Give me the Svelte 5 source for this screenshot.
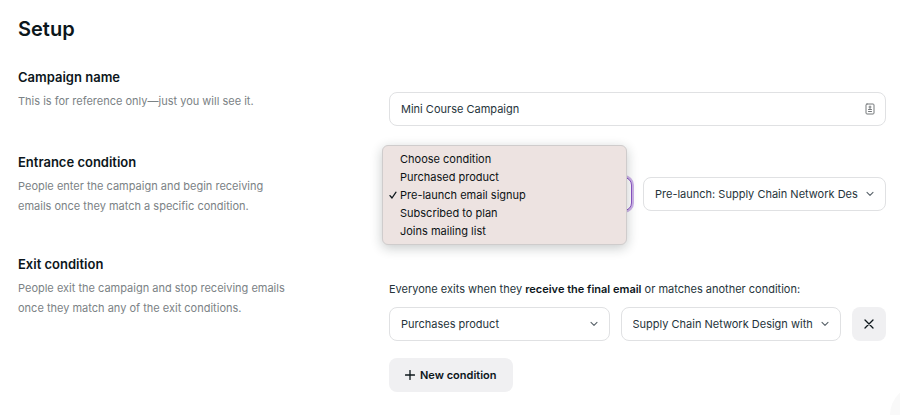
<script>
  let name = $state('Mini Course Campaign');
  let entrance = $state('Pre-launch email signup');
  let open = $state(true);
  const conditions = [
    'Choose condition',
    'Purchased product',
    'Pre-launch email signup',
    'Subscribed to plan',
    'Joins mailing list'
  ];

  function choose(condition) {
    entrance = condition;
    open = false;
  }
</script>

{#snippet chevron()}
  <svg class="chevron" viewBox="0 0 8 6" aria-hidden="true"><path d="M1 1.3 4 4.3 7 1.3" /></svg>
{/snippet}

<main>
  <h1>Setup</h1>

  <section class="name-row">
    <div class="info">
      <h2><label for="campaign-name">Campaign name</label></h2>
      <p>This is for reference only—just you will see it.</p>
    </div>
    <div class="controls">
      <div class="field">
        <input id="campaign-name" type="text" bind:value={name} />
        <svg class="card" viewBox="0 0 10 12" aria-hidden="true">
          <rect x="1" y="1" width="8" height="10" rx="1" />
          <path d="M5 3v3.5M4 4h2M3.5 6.5h3M3.5 8.5h3" />
        </svg>
      </div>
    </div>
  </section>

  <section class="entrance-row">
    <div class="info">
      <h2>Entrance condition</h2>
      <p>People enter the campaign and begin receiving<br />emails once they match a specific condition.</p>
    </div>
    <div class="controls">
      <div class="line">
        <div class="field">
          <button
            class="trigger"
            type="button"
            aria-haspopup="listbox"
            aria-expanded={open}
            aria-label="Entrance condition"
            onclick={() => (open = !open)}
          >{open ? '' : entrance}</button>
          {@render chevron()}
          {#if open}
            <div class="menu" role="listbox" aria-label="Entrance condition">
              {#each conditions as condition}
                <button type="button" role="option" aria-selected={condition === entrance} onclick={() => choose(condition)}>
                  <svg class="check" viewBox="0 0 8 8" aria-hidden="true">
                    {#if condition === entrance}<path d="M1 4.6 3 7 7 1.2" />{/if}
                  </svg>
                  {condition}
                </button>
              {/each}
            </div>
          {/if}
        </div>
        <div class="field">
          <select aria-label="Pre-launch product">
            <option>Pre-launch: Supply Chain Network Des</option>
          </select>
          {@render chevron()}
        </div>
      </div>
    </div>
  </section>

  <section class="exit-row">
    <div class="info">
      <h2>Exit condition</h2>
      <p>People exit the campaign and stop receiving emails<br />once they match any of the exit conditions.</p>
    </div>
    <div class="controls">
      <p class="note">Everyone exits when they <strong>receive the final email</strong> or matches another condition:</p>
      <div class="line">
        <div class="field">
          <select aria-label="Exit condition">
            <option>Purchases product</option>
          </select>
          {@render chevron()}
        </div>
        <div class="field">
          <select aria-label="Exit product">
            <option>Supply Chain Network Design with</option>
          </select>
          {@render chevron()}
        </div>
        <button class="remove" type="button" aria-label="Remove condition">
          <svg viewBox="0 0 10 10" aria-hidden="true"><path d="M1 1l8 8M9 1l-8 8" /></svg>
        </button>
      </div>
      <button class="add" type="button">
        <svg viewBox="0 0 10 10" aria-hidden="true"><path d="M5 .5v9M.5 5h9" /></svg>
        New condition
      </button>
    </div>
  </section>

  <div class="bubble" aria-hidden="true"></div>
</main>

<style>
  :global(body) {
    background: #fff;
  }

  main {
    padding: 16px 14px 0 18px;
    overflow: hidden;
    color: #0c161b;
    font: 400 11px/20px Inter, sans-serif;
  }

  h1,
  h2,
  p {
    margin: 0;
  }

  h1 {
    font-size: 20px;
    line-height: 26px;
    font-weight: 600;
  }

  h2 {
    font-size: 13px;
    line-height: 20px;
    font-weight: 600;
  }

  section {
    display: grid;
    grid-template-columns: 371px minmax(0, 1fr);
  }

  .name-row {
    margin-top: 25px;
  }

  .entrance-row {
    margin-top: 26px;
  }

  .exit-row {
    margin-top: 38px;
  }

  .info p {
    margin-top: 4px;
    color: #7b8285;
  }

  .controls {
    padding-top: 25px;
  }

  .line {
    display: flex;
    gap: 11px;
  }

  .field {
    position: relative;
    flex: 1;
    min-width: 0;
  }

  input,
  select,
  .trigger {
    display: block;
    box-sizing: border-box;
    width: 100%;
    height: 34px;
    padding: 0 23px 0 11px;
    border: 1px solid #e0e1e3;
    border-radius: 8px;
    outline: none;
    appearance: none;
    background: #fff;
    color: #26343b;
    font: inherit;
    text-align: left;
  }

  .trigger {
    border-color: #8a55c4;
    box-shadow: 0 0 0 2px #cdb2e8;
  }

  .chevron {
    position: absolute;
    top: 14px;
    right: 12px;
    width: 8px;
    height: 6px;
    pointer-events: none;
  }

  .card {
    position: absolute;
    top: 11px;
    right: 11px;
    width: 10px;
    height: 12px;
  }

  svg {
    fill: none;
    stroke: #0c161b;
    stroke-width: 1.3;
    stroke-linecap: round;
    stroke-linejoin: round;
  }

  .chevron {
    stroke: #59636a;
    stroke-width: 1.1;
  }

  .card {
    stroke: #74787b;
    stroke-width: 1;
  }

  .menu {
    position: absolute;
    z-index: 1;
    top: -32px;
    left: -7px;
    box-sizing: border-box;
    width: 245px;
    padding: 4px 0;
    border: 1px solid #cfcccc;
    border-radius: 6px;
    background: #ede3e1;
    box-shadow: 0 3px 12px rgba(20, 35, 35, 0.24);
  }

  .menu button {
    display: flex;
    align-items: center;
    gap: 3px;
    width: 100%;
    height: 18px;
    padding: 0 6px;
    border: 0;
    background: none;
    color: #0c1214;
    font: inherit;
  }

  .check {
    width: 8px;
    height: 8px;
  }

  .note {
    color: #26343b;
    margin-bottom: 8px;
  }

  strong {
    font-weight: 600;
    color: #0c161b;
  }

  .remove,
  .add {
    display: flex;
    align-items: center;
    justify-content: center;
    height: 34px;
    border: 0;
    border-radius: 8px;
    background: #f0f0f2;
    color: #0c161b;
    font: inherit;
    font-weight: 600;
  }

  .remove {
    width: 34px;
    padding: 0;
  }

  .add {
    gap: 5px;
    margin-top: 17px;
    padding: 0 17px 0 16px;
  }

  .remove svg,
  .add svg {
    width: 10px;
    height: 10px;
  }

  .bubble {
    position: fixed;
    right: -50px;
    bottom: -30px;
    width: 60px;
    height: 60px;
    border-radius: 50%;
    background: #f9f9f9;
  }
</style>
